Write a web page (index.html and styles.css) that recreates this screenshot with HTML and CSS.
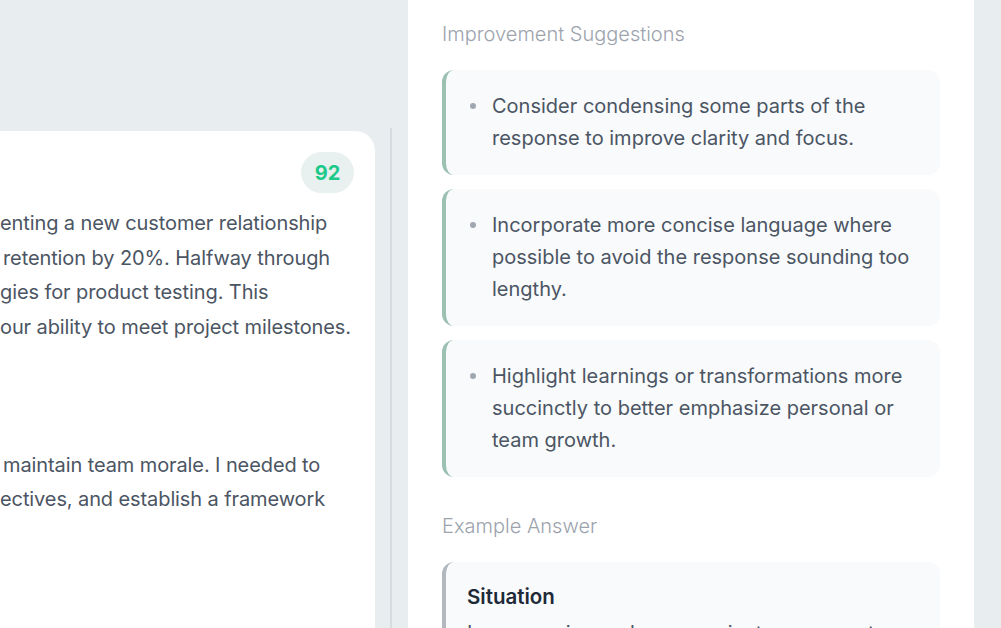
FILE: index.html
```html
<!DOCTYPE html>
<html lang="en">
<head>
<meta charset="utf-8">
<title>Feedback</title>
<link rel="stylesheet" href="styles.css">
</head>
<body>
<div class="layout">
  <section class="left-area">
    <div class="answer-card">
      <div class="card-head"><span class="score">92</span></div>
      <div class="answer-text">
        <div class="line">enting a new customer relationship</div>
        <div class="line indent">retention by 20%. Halfway through</div>
        <div class="line">gies for product testing. This</div>
        <div class="line">our ability to meet project milestones.</div>
        <div class="para-gap"></div>
        <div class="line indent">maintain team morale. I needed to</div>
        <div class="line">ectives, and establish a framework</div>
      </div>
    </div>
    <div class="divider"></div>
  </section>
  <aside class="panel">
    <h2 class="section-title">Improvement Suggestions</h2>
    <ul class="suggestions">
      <li class="suggestion"><span class="dot"></span><p>Consider condensing some parts of the response to improve clarity and focus.</p></li>
      <li class="suggestion"><span class="dot"></span><p>Incorporate more concise language where possible to avoid the response sounding too lengthy.</p></li>
      <li class="suggestion"><span class="dot"></span><p>Highlight learnings or transformations more succinctly to better emphasize personal or team growth.</p></li>
    </ul>
    <h2 class="section-title second">Example Answer</h2>
    <div class="example">
      <h3>Situation</h3>
      <p>In my previous role as a project manager at Tech</p>
    </div>
  </aside>
</div>
</body>
</html>
```

FILE: styles.css
```css
* { box-sizing: border-box; }
html, body { margin: 0; padding: 0; }
body {
  background: #e8edf0;
  font-family: Inter, "Noto Sans", sans-serif;
  color: #4b5563;
  width: 1001px;
  height: 628px;
  overflow: hidden;
}
.layout {
  display: flex;
  height: 628px;
  overflow: hidden;
}
.left-area {
  width: 408px;
  flex: none;
  display: flex;
}
.answer-card {
  width: 375px;
  height: 497px;
  margin-top: 131px;
  background: #ffffff;
  border-radius: 0 20px 0 0;
  padding: 21px 21px 0 0;
  overflow: hidden;
}
.card-head {
  display: flex;
  justify-content: flex-end;
}
.score {
  display: flex;
  align-items: center;
  justify-content: center;
  width: 53px;
  height: 41px;
  border-radius: 21px;
  background: #e9f0f0;
  color: #1fc98a;
  font-weight: 700;
  font-size: 20px;
}
.answer-text {
  margin-top: 13px;
  font-size: 20px;
  line-height: 34.5px;
  color: #4b5563;
  letter-spacing: -0.1px;
}
.line { white-space: nowrap; }
.line.indent { padding-left: 3px; }
.para-gap { height: 103.5px; }
.divider {
  width: 2px;
  margin-left: 15px;
  margin-top: 128px;
  background: #d6dde1;
}
.panel {
  width: 566px;
  height: 628px;
  flex: none;
  background: #ffffff;
  padding: 20px 34px 0 34px;
  overflow: hidden;
}
.section-title {
  margin: 0;
  font-size: 20px;
  line-height: 28px;
  font-weight: 300;
  color: #9ca3ad;
}
.section-title.second { margin-top: 35px; }
.suggestions {
  list-style: none;
  margin: 22px 0 0;
  padding: 0;
  display: flex;
  flex-direction: column;
  gap: 14px;
}
.suggestion {
  display: flex;
  align-items: flex-start;
  background: #f8fafc;
  border-left: 4px solid #9cc0b2;
  border-radius: 12px;
  padding: 20px 20px 21px 24px;
}
.dot {
  flex: none;
  width: 6px;
  height: 6px;
  border-radius: 50%;
  background: #a0a7b0;
  margin-top: 13px;
  margin-right: 16px;
}
.suggestion p {
  margin: 0;
  font-size: 20px;
  line-height: 32px;
  color: #4b5563;
}
.example {
  margin-top: 22px;
  background: #f8fafc;
  border-left: 4px solid #b3b8be;
  border-radius: 12px 12px 0 0;
  padding: 21px 20px 0 21px;
  height: 90px;
  overflow: hidden;
}
.example h3 {
  margin: 0;
  font-size: 20.5px;
  line-height: 28px;
  font-weight: 600;
  color: #1f2937;
}
.example p {
  margin: 6px 0 0;
  font-size: 20px;
  line-height: 32px;
  color: #4b5563;
}
```
